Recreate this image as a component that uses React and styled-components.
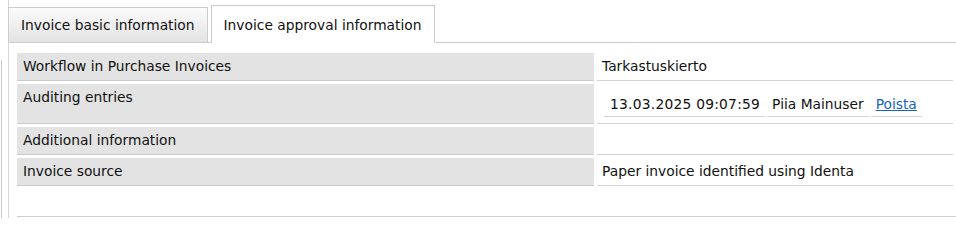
import React from "react";
import styled, { createGlobalStyle } from "styled-components";

const GlobalStyle = createGlobalStyle`
  html, body {
    margin: 0;
    padding: 0;
    background: #ffffff;
    overflow: hidden;
  }
  body {
    font-family: "DejaVu Sans", Verdana, sans-serif;
    font-size: 13.8px;
    color: #111111;
  }
`;

const Shell = styled.div`
  display: flex;
  width: 956px;
  height: 218px;
`;

const SideStub = styled.div`
  margin: 60px 0 0 1px;
  width: 1px;
  background: #c9cdd3;
`;

const Main = styled.div`
  flex: 1;
  margin-left: 6px;
  display: flex;
  flex-direction: column;
  border-left: 1px solid #d6d6d6;
`;

const TabBar = styled.div`
  display: flex;
  align-items: flex-end;
  gap: 3px;
  height: 42px;
  border-bottom: 1px solid #cccccc;
  margin-left: -1px;
`;

const Tab = styled.div`
  box-sizing: border-box;
  height: ${(p) => (p.$active ? "38px" : "36px")};
  margin-bottom: -1px;
  padding: ${(p) => (p.$active ? "11px" : "9px")} 12px 0 12px;
  border: 1px solid #cccccc;
  border-bottom-color: ${(p) => (p.$active ? "#ffffff" : "#cccccc")};
  background: ${(p) =>
    p.$active ? "#ffffff" : "linear-gradient(#fbfbfb, #e3e3e3)"};
  line-height: 17px;
  white-space: nowrap;
  cursor: pointer;
`;

const Panel = styled.div`
  padding: 7px 0 0 5px;
  flex: 1;
  display: flex;
  flex-direction: column;
`;

const InfoTable = styled.table`
  width: 100%;
  border-collapse: separate;
  border-spacing: 3px;
`;

const Label = styled.td`
  width: 565px;
  padding: 5px 6px;
  line-height: 17px;
  vertical-align: top;
  background: #e3e3e3;
  border-bottom: 1px solid #cbcbcb;
`;

const Value = styled.td`
  padding: ${(p) => (p.$nested ? "4px 5px 4px 5px" : "5px")};
  line-height: 17px;
  vertical-align: top;
  border-bottom: 1px solid #d2d2d2;
`;

const EntryTable = styled.table`
  border-collapse: separate;
  border-spacing: 2px;
`;

const EntryCell = styled.td`
  padding: 6px 5px 3px ${(p) => (p.$date ? "6px" : "5px")};
  line-height: 17px;
  letter-spacing: ${(p) => (p.$date ? "0.25px" : "normal")};
  white-space: nowrap;
  border-bottom: 1px solid #d2d2d2;
`;

const RemoveLink = styled.a`
  color: #1565c0;
  text-decoration: underline;
  cursor: pointer;
`;

const Footer = styled.div`
  margin: 27px 0 0 3px;
  border-top: 1px solid #cfcfcf;
`;

const rows = [
  { label: "Workflow in Purchase Invoices", value: "Tarkastuskierto" },
  { label: "Auditing entries", entries: true },
  { label: "Additional information", value: "" },
  { label: "Invoice source", value: "Paper invoice identified using Identa" },
];

export default function App() {
  return (
    <>
      <GlobalStyle />
      <Shell>
        <SideStub />
        <Main>
          <TabBar>
            <Tab>Invoice basic information</Tab>
            <Tab $active>Invoice approval information</Tab>
          </TabBar>
          <Panel>
            <InfoTable>
              <tbody>
                {rows.map((r) => (
                  <tr key={r.label}>
                    <Label>{r.label}</Label>
                    {r.entries ? (
                      <Value $nested>
                        <EntryTable>
                          <tbody>
                            <tr>
                              <EntryCell $date>13.03.2025 09:07:59</EntryCell>
                              <EntryCell>Piia Mainuser</EntryCell>
                              <EntryCell>
                                <RemoveLink>Poista</RemoveLink>
                              </EntryCell>
                            </tr>
                          </tbody>
                        </EntryTable>
                      </Value>
                    ) : (
                      <Value>{r.value}</Value>
                    )}
                  </tr>
                ))}
              </tbody>
            </InfoTable>
            <Footer />
          </Panel>
        </Main>
      </Shell>
    </>
  );
}
